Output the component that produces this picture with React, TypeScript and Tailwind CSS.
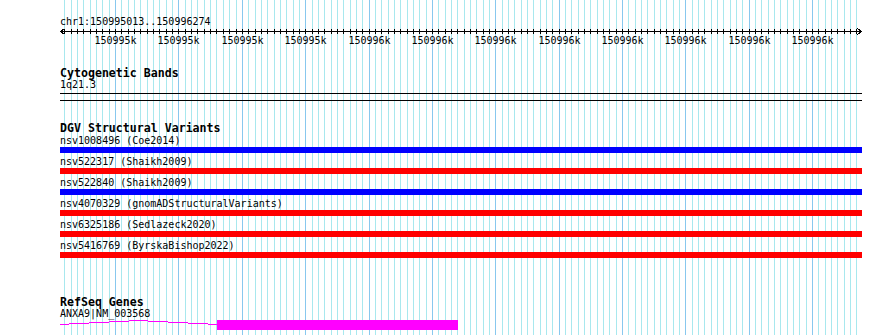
import React from 'react';

const START = 150995013;
const END = 150996274;
const X0 = 60;
const SCALE = 0.6336;

const px = (bp: number) => X0 + (bp - START) * SCALE;

const minorTicks: number[] = [];
for (let bp = 150995020; bp <= END; bp += 10) minorTicks.push(bp);

const variants = [
  { name: 'nsv1008496 (Coe2014)', color: 'bg-[#0000ff]' },
  { name: 'nsv522317 (Shaikh2009)', color: 'bg-[#ff0000]' },
  { name: 'nsv522840 (Shaikh2009)', color: 'bg-[#0000ff]' },
  { name: 'nsv4070329 (gnomADStructuralVariants)', color: 'bg-[#ff0000]' },
  { name: 'nsv6325186 (Sedlazeck2020)', color: 'bg-[#ff0000]' },
  { name: 'nsv5416769 (ByrskaBishop2022)', color: 'bg-[#ff0000]' },
];

function GridLines() {
  return (
    <svg className="absolute inset-0" width={890} height={335} shapeRendering="crispEdges">
      {minorTicks.map((bp) => {
        const x = Math.round(px(bp)) + 0.5;
        const major = bp % 100 === 0;
        return (
          <line key={bp} x1={x} x2={x} y1={0} y2={335} stroke={major ? '#88c8ee' : '#a8e8ee'} strokeWidth={1} />
        );
      })}
    </svg>
  );
}

function Ruler() {
  const labels = minorTicks.filter((bp) => bp % 100 === 0);
  return (
    <svg width={803} height={20} className="block" shapeRendering="crispEdges">
      <line x1={0} x2={802} y1={4.5} y2={4.5} stroke="#000" />
      {minorTicks.map((bp) => {
        const x = Math.round(px(bp)) - X0 + 0.5;
        return <line key={bp} x1={x} x2={x} y1={2} y2={7} stroke="#000" />;
      })}
      <path d="M0.5 4.5 L4.5 1.5 M0.5 4.5 L4.5 7.5" stroke="#000" fill="none" />
      <path d="M801.5 4.5 L797.5 1.5 M801.5 4.5 L797.5 7.5" stroke="#000" fill="none" />
      {labels.map((bp) => (
        <text
          key={bp}
          x={Math.round(px(bp)) - X0 + 0.5}
          y={17}
          textAnchor="middle"
          fontSize={10}
          fontFamily="'DejaVu Sans Mono', monospace"
          fill="#000"
        >
          {Math.round(bp / 1000)}k
        </text>
      ))}
    </svg>
  );
}

function TrackTitle({ children, className }: { children: React.ReactNode; className?: string }) {
  return <div className={`text-[11.6px] leading-[11px] font-bold ${className ?? ''}`}>{children}</div>;
}

// intron drawn as a shallow stepped hat, exon as a thick box
function Gene() {
  const top = 319;
  const steps = [324, 323, 322, 321, 320, 321, 322, 323, 324];
  const xs = [59, 69, 89, 109, 129, 148, 168, 188, 208, 217];
  return (
    <svg width={803} height={13} className="block" shapeRendering="crispEdges">
      {steps.map((y, i) => (
        <line key={i} x1={xs[i] - X0} x2={xs[i + 1] - X0} y1={y - top + 0.5} y2={y - top + 0.5} stroke="#ff00ff" />
      ))}
      <rect x={217 - X0} y={320 - top} width={241} height={10} fill="#ff00ff" />
    </svg>
  );
}

export default function App() {
  return (
    <div className="relative w-[890px] h-[335px] overflow-hidden bg-white text-black font-['DejaVu_Sans_Mono',monospace]">
      <GridLines />
      <div className="relative flex flex-col pl-[60px] pt-[16px]">
        <div className="text-[10px] leading-[11px]">chr1:150995013..150996274</div>
        <Ruler />

        <TrackTitle className="mt-[21px]">Cytogenetic Bands</TrackTitle>
        <div className="text-[10px] leading-[11px]">1q21.3</div>
        <div className="mt-[3px] h-[8px] w-[802px] border-y border-black" />

        <TrackTitle className="mt-[22px]">DGV Structural Variants</TrackTitle>
        <div className="mt-[1px] flex flex-col">
          {variants.map((v) => (
            <div key={v.name} className="flex flex-col pb-[3px]">
              <div className="text-[10px] leading-[11px]">{v.name}</div>
              <div className={`mt-[1px] h-[6px] w-[802px] ${v.color}`} />
            </div>
          ))}
        </div>

        <TrackTitle className="mt-[36px]">RefSeq Genes</TrackTitle>
        <div className="text-[10px] leading-[11px]">ANXA9|NM_003568</div>
        <Gene />
      </div>
    </div>
  );
}
